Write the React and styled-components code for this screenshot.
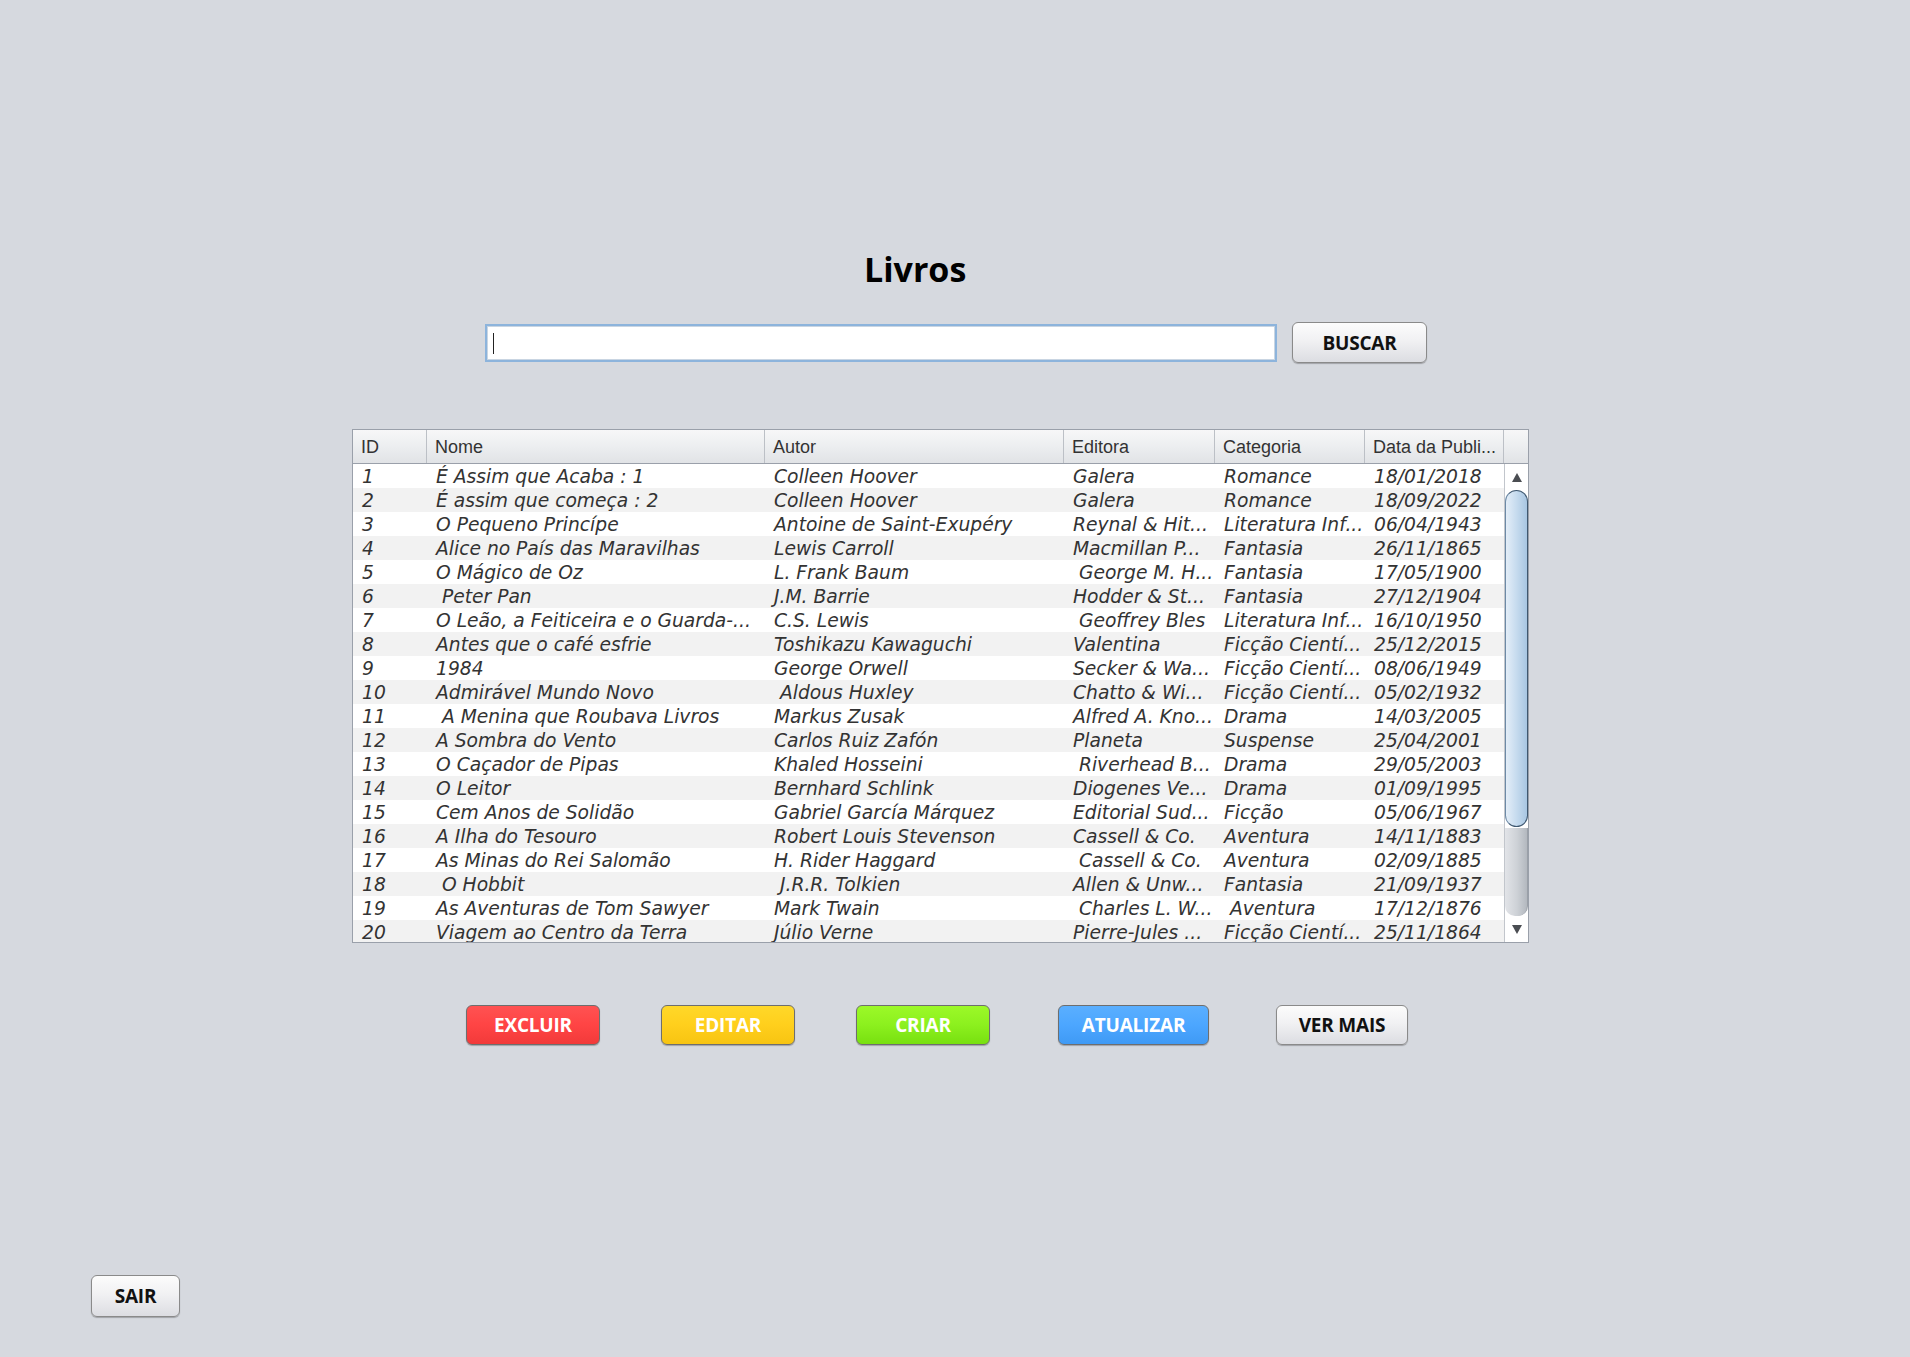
import React from 'react'
import styled, { createGlobalStyle } from 'styled-components'

const books = [
  ['1', 'É Assim que Acaba : 1', 'Colleen Hoover', 'Galera', 'Romance', '18/01/2018'],
  ['2', 'É assim que começa : 2', 'Colleen Hoover', 'Galera', 'Romance', '18/09/2022'],
  ['3', 'O Pequeno Princípe', 'Antoine de Saint-Exupéry', 'Reynal & Hit...', 'Literatura Inf...', '06/04/1943'],
  ['4', 'Alice no País das Maravilhas', 'Lewis Carroll', 'Macmillan P...', 'Fantasia', '26/11/1865'],
  ['5', 'O Mágico de Oz', 'L. Frank Baum', ' George M. H...', 'Fantasia', '17/05/1900'],
  ['6', ' Peter Pan', 'J.M. Barrie', 'Hodder & St...', 'Fantasia', '27/12/1904'],
  ['7', 'O Leão, a Feiticeira e o Guarda-...', 'C.S. Lewis', ' Geoffrey Bles', 'Literatura Inf...', '16/10/1950'],
  ['8', 'Antes que o café esfrie', 'Toshikazu Kawaguchi', 'Valentina', 'Ficção Cientí...', '25/12/2015'],
  ['9', '1984', 'George Orwell', 'Secker & Wa...', 'Ficção Cientí...', '08/06/1949'],
  ['10', 'Admirável Mundo Novo', ' Aldous Huxley', 'Chatto & Wi...', 'Ficção Cientí...', '05/02/1932'],
  ['11', ' A Menina que Roubava Livros', 'Markus Zusak', 'Alfred A. Kno...', 'Drama', '14/03/2005'],
  ['12', 'A Sombra do Vento', 'Carlos Ruiz Zafón', 'Planeta', 'Suspense', '25/04/2001'],
  ['13', 'O Caçador de Pipas', 'Khaled Hosseini', ' Riverhead B...', 'Drama', '29/05/2003'],
  ['14', 'O Leitor', 'Bernhard Schlink', 'Diogenes Ve...', 'Drama', '01/09/1995'],
  ['15', 'Cem Anos de Solidão', 'Gabriel García Márquez', 'Editorial Sud...', 'Ficção', '05/06/1967'],
  ['16', 'A Ilha do Tesouro', 'Robert Louis Stevenson', 'Cassell & Co.', 'Aventura', '14/11/1883'],
  ['17', 'As Minas do Rei Salomão', 'H. Rider Haggard', ' Cassell & Co.', 'Aventura', '02/09/1885'],
  ['18', ' O Hobbit', ' J.R.R. Tolkien', 'Allen & Unw...', 'Fantasia', '21/09/1937'],
  ['19', 'As Aventuras de Tom Sawyer', 'Mark Twain', ' Charles L. W...', ' Aventura', '17/12/1876'],
  ['20', 'Viagem ao Centro da Terra', 'Júlio Verne', 'Pierre-Jules ...', 'Ficção Cientí...', '25/11/1864'],
]

const columns = ['ID', 'Nome', 'Autor', 'Editora', 'Categoria', 'Data da Publi...']
const colTemplate = '74px 338px 299px 151px 150px 139px'

const GlobalStyle = createGlobalStyle`
  html, body {
    margin: 0;
    padding: 0;
    background: #d6d9df;
  }
`

const Page = styled.div`
  min-height: 100vh;
  box-sizing: border-box;
  display: flex;
  flex-direction: column;
  padding-top: 252px;
  padding-bottom: 40px;
  background: #d6d9df;
  font-family: "Open Sans", "DejaVu Sans", sans-serif;
`

const Title = styled.h1`
  margin: 0 0 0 864px;
  font-size: 34px;
  line-height: 34px;
  font-weight: 700;
  color: #000;
`

const SearchRow = styled.div`
  display: flex;
  align-items: center;
  gap: 15px;
  margin: 36px 0 0 485px;
  height: 41px;
`

const SearchField = styled.div`
  position: relative;
  width: 788px;
  height: 34px;
  background: #fff;
  border: 2px solid #8db4dc;
  box-shadow: inset 0 0 0 1px #c9d5e2;
`

const Caret = styled.span`
  position: absolute;
  left: 6px;
  top: 7px;
  width: 1px;
  height: 21px;
  background: #222;
`

const Button = styled.button`
  box-sizing: border-box;
  width: ${p => p.$w}px;
  height: ${p => p.$h || 40}px;
  margin-left: ${p => p.$gap || 0}px;
  padding: 0;
  border: 1px solid ${p => p.$border || '#8a8a8a'};
  border-radius: 6px;
  background: ${p => p.$bg || 'linear-gradient(#fcfcfc, #f1f1f3 45%, #dcdde2)'};
  box-shadow: 0 1px 1px rgba(0, 0, 0, 0.25);
  color: ${p => p.$color || '#111'};
  font-family: "Open Sans", "DejaVu Sans", sans-serif;
  font-weight: 700;
  font-size: 19px;
  letter-spacing: -0.2px;
  cursor: pointer;
`

const TableFrame = styled.div`
  margin: 66px 0 0 352px;
  width: 1175px;
  border: 1px solid #9aa0aa;
  background: #fff;
`

const HeaderRow = styled.div`
  display: grid;
  grid-template-columns: ${colTemplate} 24px;
  height: 33px;
  border-bottom: 1px solid #9aa0aa;
  background: linear-gradient(#f7f7f8, #eceef0 50%, #e1e3e6);
`

const HeaderCell = styled.div`
  box-sizing: border-box;
  padding-left: 8px;
  border-right: 1px solid #bcc0c6;
  font-family: "Liberation Sans", Arial, sans-serif;
  font-size: 18px;
  line-height: 34px;
  color: #333;
  white-space: nowrap;
  overflow: hidden;

  &:last-child {
    border-right: none;
  }
`

const Body = styled.div`
  display: flex;
  height: 478px;
  overflow: hidden;
`

const Rows = styled.div`
  width: 1151px;
`

const Row = styled.div`
  display: grid;
  grid-template-columns: ${colTemplate};
  height: 24px;
  background: ${p => (p.$alt ? '#f2f2f2' : '#fff')};
`

const Cell = styled.div`
  padding: 1px 0 0 9px;
  font-family: "DejaVu Sans", sans-serif;
  font-style: oblique;
  font-size: 18.7px;
  line-height: 24px;
  color: #333;
  white-space: pre;
  overflow: hidden;
`

const ScrollBar = styled.div`
  width: 24px;
  display: flex;
  flex-direction: column;
  border-left: 1px solid #c2c6cc;
  background: #fff;
`

const Arrow = styled.div`
  height: 26px;
  display: flex;
  align-items: center;
  justify-content: center;

  &::after {
    content: '';
    border-left: 5px solid transparent;
    border-right: 5px solid transparent;
    ${p => (p.$down ? 'border-top: 9px solid #4a4d52;' : 'border-bottom: 9px solid #4a4d52;')}
  }
`

const Thumb = styled.div`
  height: 337px;
  box-sizing: border-box;
  border: 1px solid #3f5870;
  border-left-color: #6d8aa6;
  border-radius: 12px;
  background: linear-gradient(90deg, #e4eef8, #c6dbee 50%, #a8c6e2);
`

const Track = styled.div`
  flex: 1;
  margin-top: 1px;
  border-radius: 0 0 10px 10px;
  background: linear-gradient(90deg, #e2e4e8, #cdd1d6 55%, #b3b8bf);
  border-right: 1px solid #9aa0a8;
`

const Actions = styled.div`
  display: flex;
  margin: 62px 0 0 466px;
`

const Footer = styled.div`
  margin: auto 0 0 91px;
`

function App() {
  return (
    <Page>
      <GlobalStyle />
      <Title>Livros</Title>

      <SearchRow>
        <SearchField>
          <Caret />
        </SearchField>
        <Button $w={135} $h={41}>BUSCAR</Button>
      </SearchRow>

      <TableFrame>
        <HeaderRow>
          {columns.map(c => (
            <HeaderCell key={c}>{c}</HeaderCell>
          ))}
          <HeaderCell />
        </HeaderRow>
        <Body>
          <Rows>
            {books.map((b, i) => (
              <Row key={b[0]} $alt={i % 2 === 1}>
                {b.map((v, j) => (
                  <Cell key={j}>{v}</Cell>
                ))}
              </Row>
            ))}
          </Rows>
          <ScrollBar>
            <Arrow />
            <Thumb />
            <Track />
            <Arrow $down />
          </ScrollBar>
        </Body>
      </TableFrame>

      <Actions>
        <Button $w={134} $color="#fff" $border="#6e6e6e" $bg="linear-gradient(#ff5252, #ff4444 50%, #f23a3a)">EXCLUIR</Button>
        <Button $w={134} $gap={61} $color="#fff" $border="#6e6e6e" $bg="linear-gradient(#ffd829, #ffcf1c 50%, #f7c412)">EDITAR</Button>
        <Button $w={134} $gap={61} $color="#fff" $border="#6e6e6e" $bg="linear-gradient(#9cf928, #8cf01e 50%, #78e010)">CRIAR</Button>
        <Button $w={151} $gap={68} $color="#fff" $border="#6e6e6e" $bg="linear-gradient(#5aafff, #4ca6ff 50%, #3f9af5)">ATUALIZAR</Button>
        <Button $w={132} $gap={67}>VER MAIS</Button>
      </Actions>

      <Footer>
        <Button $w={89} $h={42}>SAIR</Button>
      </Footer>
    </Page>
  )
}

export default App
